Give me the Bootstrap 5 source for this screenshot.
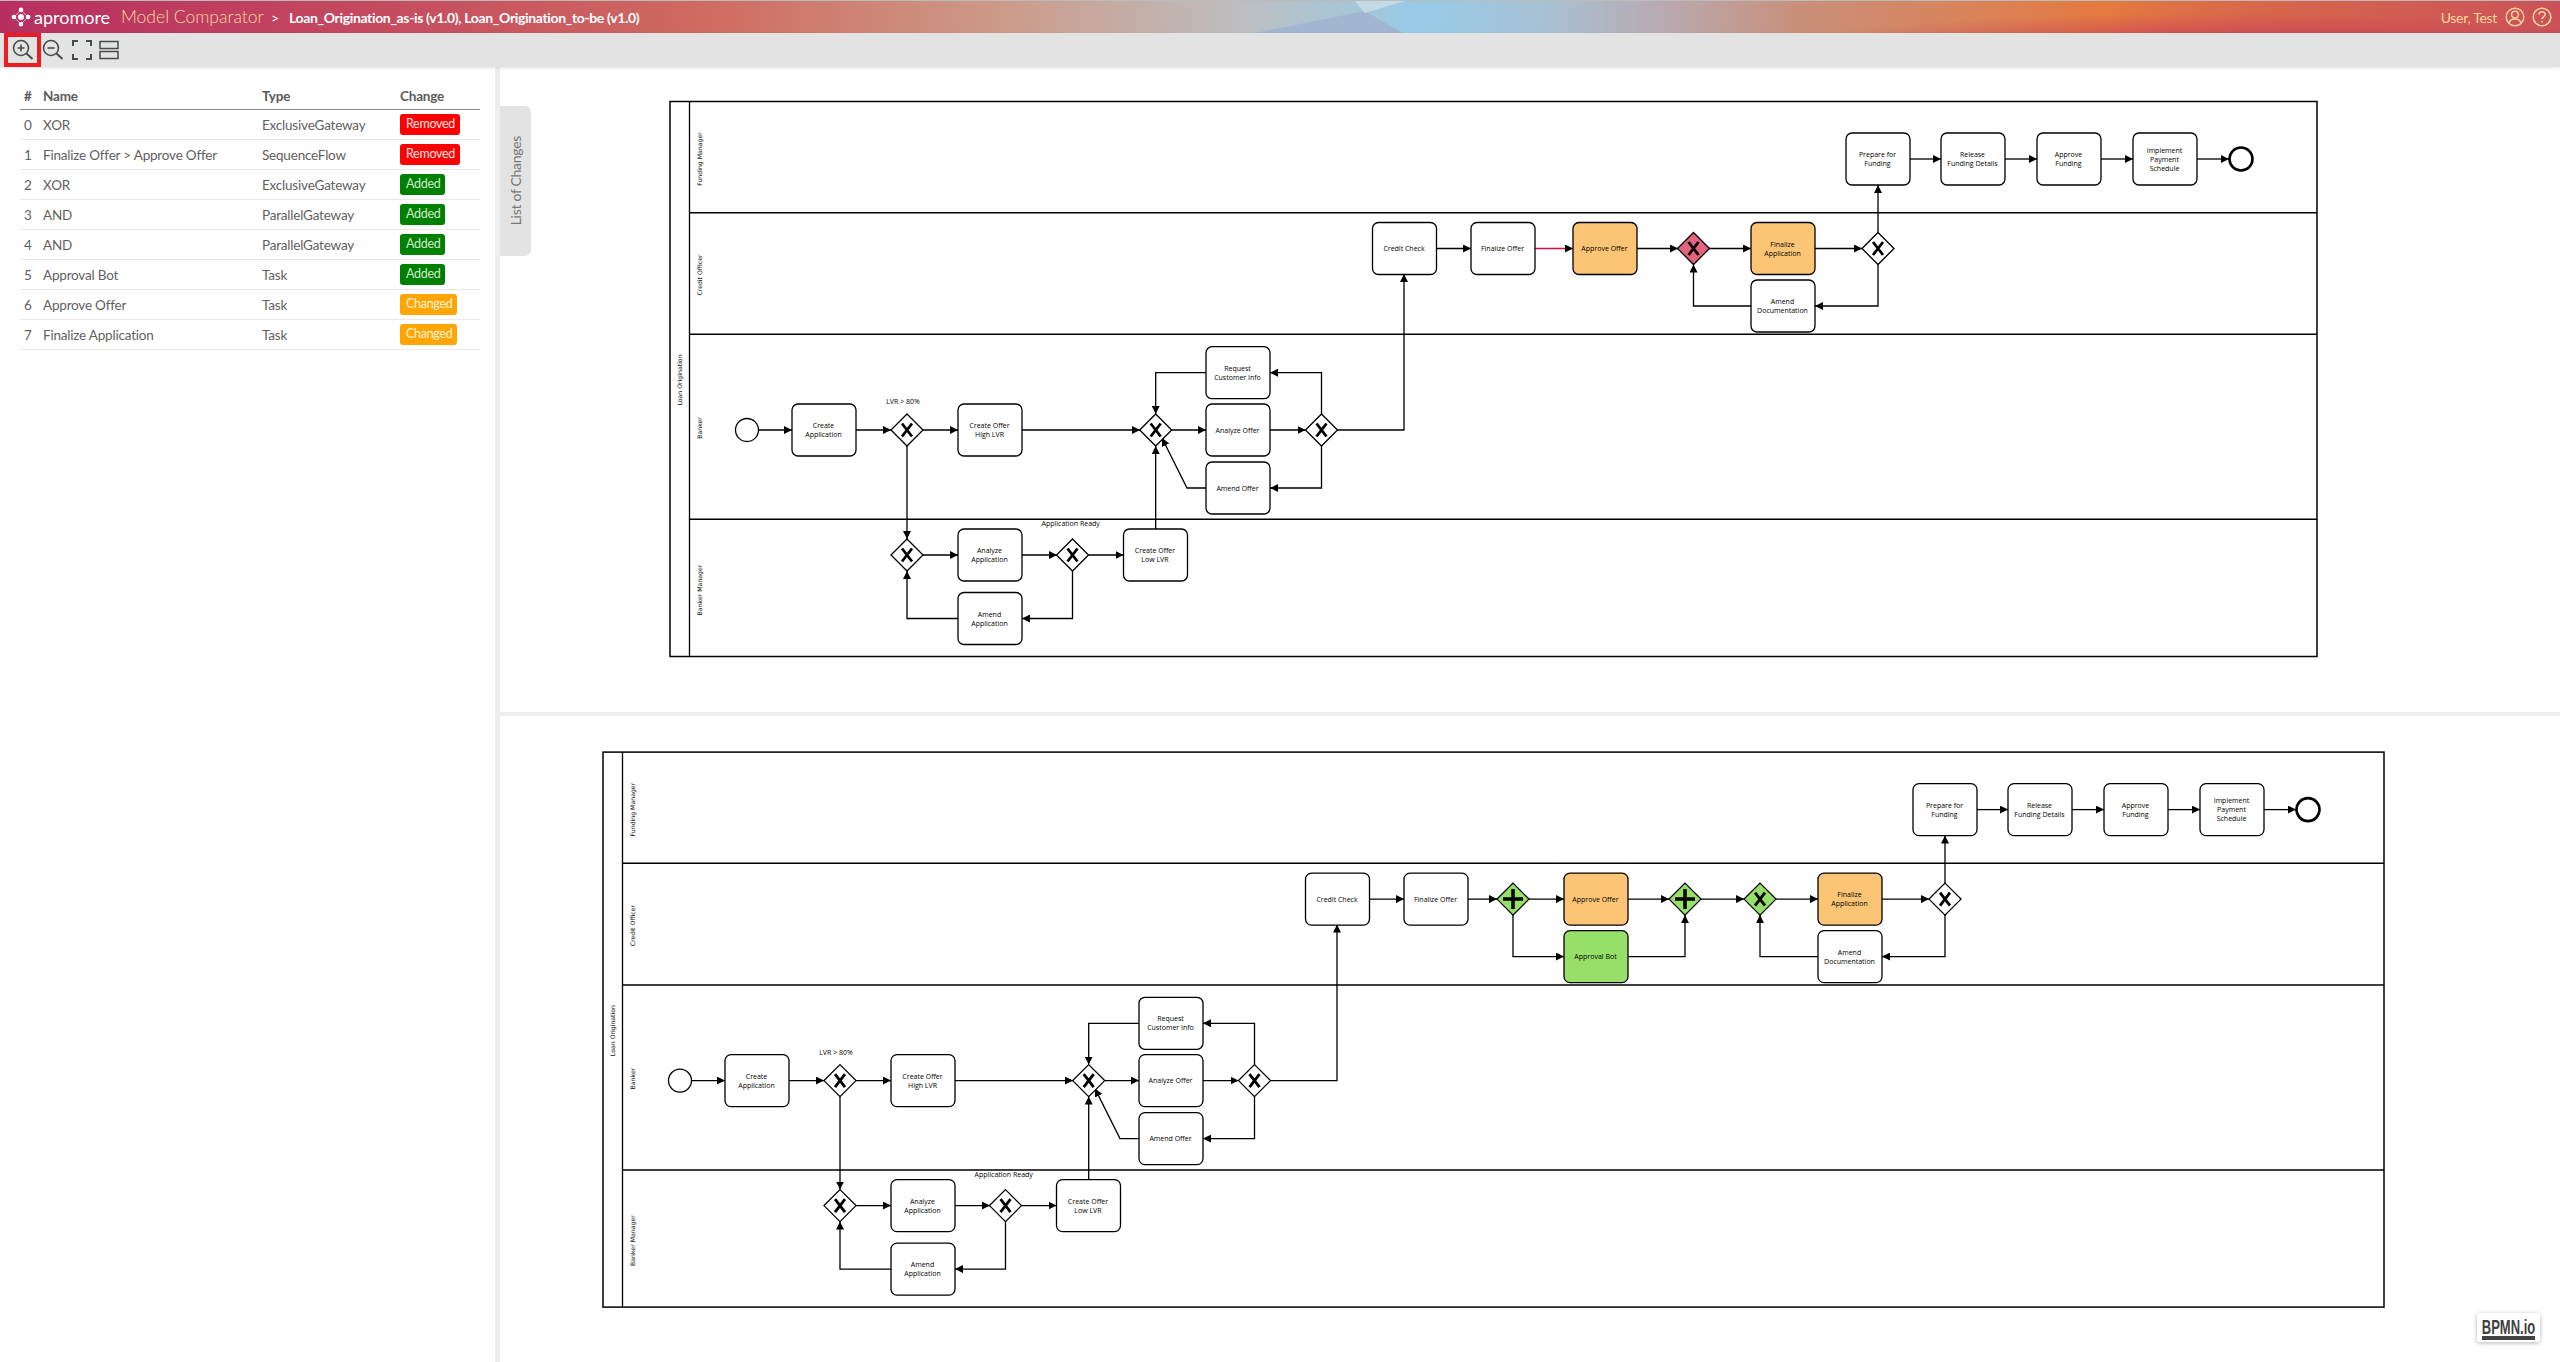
<!DOCTYPE html>
<html lang="en">
<head>
    <meta charset="UTF-8">
    <meta name="viewport" content="width=device-width, initial-scale=1.0">
    <title>Model Comparator</title>
    <link href="https://cdn.jsdelivr.net/npm/bootstrap@5.3.0/dist/css/bootstrap.min.css" rel="stylesheet">
    <style>
        html, body { height: 100%; }
        body { font-family: Lato, "Noto Sans", sans-serif; overflow: hidden; background: #fff; }

        /* Header */
        .top-bar {
            height: 33px; border-top: 1px solid #bbb; position: relative; overflow: hidden; padding-left: 11px;
            background:
                radial-gradient(ellipse 420px 30px at 2230px 42px, rgba(200,65,90,.95), rgba(200,65,90,0)),
                linear-gradient(to right, #b72f60 0, #c4485f 350px, #cf6a60 700px, #cd9a88 1000px, #bcbfc2 1250px,
                    #96cbe8 1420px, #a9c0d2 1550px, #bba6aa 1680px, #c98f7a 1800px, #e57a40 2100px, #d9674a 2250px, #ca5258 2560px);
        }
        .top-bar::before {
            content: ""; position: absolute; left: 1250px; top: 0; width: 190px; height: 33px;
            background: #a3b6cf; clip-path: polygon(0 100%, 115px 10px, 155px 100%);
        }
        .top-bar::after {
            content: ""; position: absolute; left: 1355px; top: 0; width: 60px; height: 12px;
            background: #c2dbe6; clip-path: polygon(0 0, 50px 0, 10px 100%);
        }
        .top-bar > * { position: relative; z-index: 1; flex: none; }
        .logo-word { color: #fff; font-size: 18px; font-weight: 400; width: 87px; margin-left: 3px; }
        .app-name { color: #fbd79c; font-size: 17.500px; font-weight: 300; width: 150px; white-space: nowrap; }
        .crumb-sep { color: #fff; font-size: 14px; width: 18px; }
        .file-names { color: #fff; font-size: 14px; font-weight: 700; letter-spacing: -.35px; }
        .user-name { color: #fbd5a0; font-size: 14px; letter-spacing: -.3px; }
        .help-ico { margin: 0 8px 0 7px; }

        /* Toolbar */
        .tool-bar { height: 34px; background: #e3e3e3; padding-left: 4px; box-shadow: 0 1px 3px rgba(0,0,0,.12); position: relative; z-index: 2; }
        .tool-btn { width: 27px; height: 34px; padding: 0; border: 0; background: none; display: flex; align-items: center; justify-content: center; }
        .tool-btn.is-active { width: 37px; margin-right: -2px; outline: 4px solid #ed1c24; outline-offset: -4px; }
        .tool-btn.is-out { margin-right: 2px; }

        /* Left list */
        .side-list { width: 495px; padding: 14px 15px 0 20px; flex: none; }
        .change-table { width: 460px; table-layout: fixed; margin: 0; color: #5f5f5f; font-size: 13.5px; letter-spacing: -.2px; }
        .change-table th { color: #5a5a5a; font-weight: 700; height: 28px; padding: 3px 0 0 4px; border-bottom: 1px solid #888; vertical-align: middle; }
        .change-table td { height: 30px; padding: 2px 0 0 4px; vertical-align: middle; color: #5f5f5f; border-bottom: 1px solid #e8e8e8; }
        .cell-num { width: 19px; } .cell-name { width: 219px; } .cell-type { width: 138px; } .cell-change { width: 84px; }
        .state-tag { display: inline-block; height: 21px; line-height: 19px; padding: 0 6px; font-size: 12.500px; letter-spacing: -.3px; border-radius: 3px; font-weight: 400; vertical-align: middle; margin-top: -3px; }
        .state-removed { background: #f00; color: #ffe6e6; width: 60px; }
        .state-added { background: #008000; color: #cfe8cf; width: 45px; }
        .state-changed { background: #ffa500; color: #fff3dc; width: 57px; }

        .v-split { width: 5px; background: #eee; flex: none; }
        .h-split { height: 4px; background: #eee; flex: none; }
        .list-tab {
            position: absolute; left: 500px; top: 106px; width: 31px; height: 150px; background: #e3e3e3;
            border-radius: 0 6px 6px 0; color: #777; font-size: 14px; letter-spacing: -.3px; z-index: 3;
            display: flex; align-items: center; justify-content: center;
        }
        .list-tab span { writing-mode: vertical-rl; transform: rotate(180deg); white-space: nowrap; }

        /* Diagrams */
        .pane-top { height: 645px; }
        .pane-bottom { height: 646px; }
        .pane-top svg, .pane-bottom svg { display: block; width: 2060px; height: 100%; }
        .t-task { font-family: "Open Sans", sans-serif; font-size: 7px; fill: #000; text-anchor: middle; }
        .t-lane { font-family: "DejaVu Sans", sans-serif; font-size: 6.200px; fill: #111; text-anchor: middle; }
        .bpmn-mark { position: absolute; left: 2477px; top: 1313px; width: 63px; height: 29px; background: #fff; border-radius: 2px; box-shadow: 0 1px 4px rgba(0,0,0,.3); z-index: 3; }
        .bpmn-mark svg { display: block; }
    </style>
</head>
<body class="d-flex flex-column">
    <!-- Header -->
    <header class="top-bar d-flex align-items-center">
        <svg width="20" height="20" viewBox="0 0 24 24" fill="#fff">
            <circle cx="12" cy="12" r="3.600"/>
            <circle cx="12" cy="3.500" r="2.800"/><circle cx="12" cy="20.500" r="2.800"/>
            <circle cx="3.500" cy="12" r="2.800"/><circle cx="20.500" cy="12" r="2.800"/>
            <path d="M12 3.500L20.500 12L12 20.500L3.500 12Z" fill="none" stroke="#fff" stroke-width="1" opacity=".75"/>
        </svg>
        <span class="logo-word">apromore</span>
        <span class="app-name">Model Comparator</span>
        <span class="crumb-sep">&gt;</span>
        <span class="file-names">Loan_Origination_as-is (v1.0), Loan_Origination_to-be (v1.0)</span>
        <span class="user-name ms-auto me-2">User, Test</span>
        <svg width="20" height="20" viewBox="0 0 20 20" fill="none" stroke="#fbd5a0" stroke-width="1.400">
            <circle cx="10" cy="10" r="8.800"/><circle cx="10" cy="7.600" r="3.400"/>
            <path d="M4 16c.8-3 3-4 6-4s5.200 1 6 4"/>
        </svg>
        <svg class="help-ico" width="20" height="20" viewBox="0 0 20 20" fill="none" stroke="#fbd5a0" stroke-width="1.600">
            <circle cx="10" cy="10" r="8.800"/>
            <path d="M7 7.600c0-1.800 1.400-2.800 3-2.800s3 1 3 2.700c0 2.400-3 2.300-3 4.700"/><path d="M10 14v1.600"/>
        </svg>
    </header>

    <!-- Toolbar -->
    <div class="tool-bar d-flex">
        <button class="tool-btn is-active" type="button" aria-label="Zoom in">
            <svg width="24" height="24" viewBox="0 0 24 24" fill="none" stroke="#4a4a4a" stroke-width="1.600">
                <circle cx="10" cy="10" r="7.500"/><path d="M6.500 10h7M10 6.500v7"/><path d="M15.500 15.500l6 5.500" stroke-width="2"/>
            </svg>
        </button>
        <button class="tool-btn is-out" type="button" aria-label="Zoom out">
            <svg width="24" height="24" viewBox="0 0 24 24" fill="none" stroke="#4a4a4a" stroke-width="1.600">
                <circle cx="10" cy="10" r="7.500"/><path d="M6.500 10h7"/><path d="M15.500 15.500l6 5.500" stroke-width="2"/>
            </svg>
        </button>
        <button class="tool-btn" type="button" aria-label="Fit">
            <svg width="20" height="20" viewBox="0 0 20 20" fill="none" stroke="#4a4a4a" stroke-width="2">
                <path d="M1 6V1h5M14 1h5v5M19 14v5h-5M6 19H1v-5"/>
            </svg>
        </button>
        <button class="tool-btn" type="button" aria-label="Layout">
            <svg width="20" height="20" viewBox="0 0 20 20" fill="none" stroke="#4a4a4a" stroke-width="1.500">
                <rect x="1" y="1.500" width="18" height="7"/><rect x="1" y="11.500" width="18" height="7"/>
            </svg>
        </button>
    </div>

    <!-- Main -->
    <div class="d-flex flex-fill overflow-hidden">
        <div class="side-list">
            <table class="table change-table">
                <thead>
                    <tr><th class="cell-num">#</th><th class="cell-name">Name</th><th class="cell-type">Type</th><th class="cell-change">Change</th></tr>
                </thead>
                <tbody>
                    <tr><td>0</td><td>XOR</td><td>ExclusiveGateway</td><td><span class="state-tag state-removed">Removed</span></td></tr>
                    <tr><td>1</td><td>Finalize Offer &gt; Approve Offer</td><td>SequenceFlow</td><td><span class="state-tag state-removed">Removed</span></td></tr>
                    <tr><td>2</td><td>XOR</td><td>ExclusiveGateway</td><td><span class="state-tag state-added">Added</span></td></tr>
                    <tr><td>3</td><td>AND</td><td>ParallelGateway</td><td><span class="state-tag state-added">Added</span></td></tr>
                    <tr><td>4</td><td>AND</td><td>ParallelGateway</td><td><span class="state-tag state-added">Added</span></td></tr>
                    <tr><td>5</td><td>Approval Bot</td><td>Task</td><td><span class="state-tag state-added">Added</span></td></tr>
                    <tr><td>6</td><td>Approve Offer</td><td>Task</td><td><span class="state-tag state-changed">Changed</span></td></tr>
                    <tr><td>7</td><td>Finalize Application</td><td>Task</td><td><span class="state-tag state-changed">Changed</span></td></tr>
                </tbody>
            </table>
        </div>
        <div class="v-split"></div>
        <div class="flex-fill d-flex flex-column">
            <div class="pane-top"><svg id="diagram-top" viewBox="500 67 2060 645"></svg></div>
            <div class="h-split"></div>
            <div class="pane-bottom"><svg id="diagram-bottom" viewBox="500 716 2060 646"></svg></div>
        </div>
    </div>

    <div class="list-tab"><span>List of Changes</span></div>
    <div class="bpmn-mark">
        <svg width="63" height="29" viewBox="0 0 63 29">
            <text transform="translate(31.500 21) scale(1 1.500)" text-anchor="middle" font-family="'Liberation Sans', sans-serif" font-size="13" font-weight="700" fill="#414141">BPMN.io</text>
            <rect x="5" y="23" width="53" height="4" fill="#414141"/>
        </svg>
    </div>

    <script>
        const ORANGE = '#fbc575', GREEN = '#96df68', PINK = '#e3647f';

        // Draws one pool. Coordinates are those of the upper diagram, dy moves them down
        function buildDiagram(svgId, opt) {
            const { dy, L, R, x0, x1, extra, withDefs } = opt;
            let out = '';
            if (withDefs) {
                out += '<defs><marker id="arrow" viewBox="0 0 10 10" refX="10" refY="5" markerWidth="8" markerHeight="8" orient="auto" markerUnits="userSpaceOnUse"><path d="M0 0L10 5L0 10z" fill="#000"/></marker></defs>';
            }

            // pool and lanes
            out += `<rect x="${x0}" y="${101.5 + dy}" width="${x1 - x0}" height="555" fill="#fff" stroke="#000" stroke-width="1.500"/>`;
            out += `<path d="M${x0 + 19.500} ${101.5 + dy}V${656.5 + dy}" stroke="#000" stroke-width="1.300"/>`;
            [212.7, 334.3, 519.3].forEach(y => {
                out += `<path d="M${x0 + 19.500} ${y + dy}H${x1}" stroke="#000" stroke-width="1.500"/>`;
            });
            const vText = (x, y, s) => `<text class="t-lane" transform="translate(${x} ${y + dy}) rotate(-90)">${s}</text>`;
            out += vText(x0 + 11.500, 380, 'Loan Origination');
            out += vText(x0 + 31.500, 159, 'Funding Manager');
            out += vText(x0 + 31.500, 275, 'Credit Officer');
            out += vText(x0 + 31.500, 428, 'Banker');
            out += vText(x0 + 31.500, 590, 'Banker Manager');

            const flow = (pts, color) => {
                const d = pts.map(p => `${p[0]},${p[1] + dy}`).join(' ');
                out += `<polyline points="${d}" fill="none" stroke="${color || '#000'}" stroke-width="1.300" marker-end="url(#arrow)"/>`;
            };
            const task = (x, cy, lines, fill) => {
                out += `<rect x="${x}" y="${cy + dy - 26}" width="64" height="52" rx="6" fill="${fill || '#fff'}" stroke="#000" stroke-width="1.300"/>`;
                const top = cy + dy + 2.500 - (lines.length - 1) * 4.500;
                lines.forEach((s, i) => {
                    out += `<text class="t-task" x="${x + 31.500}" y="${top + i * 9}">${s}</text>`;
                });
            };
            const gate = (cx, cy, kind, fill) => {
                const y = cy + dy;
                out += `<path d="M${cx} ${y - 16}L${cx + 16} ${y}L${cx} ${y + 16}L${cx - 16} ${y}Z" fill="${fill || '#fff'}" stroke="#000" stroke-width="1.300"/>`;
                if (kind === 'x') {
                    out += `<path d="M${cx - 5} ${y - 6.500}L${cx + 5} ${y + 6.500}M${cx + 5} ${y - 6.500}L${cx - 5} ${y + 6.500}" stroke="#000" stroke-width="2.800"/>`;
                } else {
                    out += `<path d="M${cx - 10} ${y}H${cx + 10}M${cx} ${y - 10}V${y + 10}" stroke="#000" stroke-width="3.500"/>`;
                }
            };
            const circle = (cx, cy, w) => {
                out += `<circle cx="${cx}" cy="${cy + dy}" r="11.500" fill="#fff" stroke="#000" stroke-width="${w}"/>`;
            };
            const label = (x, y, s) => {
                out += `<text class="t-task" x="${x}" y="${y + dy}">${s}</text>`;
            };

            // flows of the left part, same in both diagrams
            flow([[759 + L, 430], [792 + L, 430]]);
            flow([[856 + L, 430], [891 + L, 430]]);
            flow([[923 + L, 430], [958 + L, 430]]);
            flow([[1022 + L, 430], [1140 + L, 430]]);
            flow([[1172 + L, 430], [1206 + L, 430]]);
            flow([[1270 + L, 430], [1305.5 + L, 430]]);
            flow([[1321.5 + L, 414], [1321.5 + L, 372.7], [1270 + L, 372.7]]);
            flow([[1206 + L, 372.7], [1155.7 + L, 372.7], [1155.7 + L, 414]]);
            flow([[1321.5 + L, 446], [1321.5 + L, 488], [1270 + L, 488]]);
            flow([[1206 + L, 488], [1187 + L, 488], [1162 + L, 438]]);
            flow([[1155.7 + L, 529], [1155.7 + L, 446]]);
            flow([[907 + L, 446], [907 + L, 539]]);
            flow([[923 + L, 555], [958 + L, 555]]);
            flow([[1022 + L, 555], [1057 + L, 555]]);
            flow([[1088.5 + L, 555], [1123.5 + L, 555]]);
            flow([[1072.5 + L, 571], [1072.5 + L, 618.5], [1022 + L, 618.5]]);
            flow([[958 + L, 618.5], [907 + L, 618.5], [907 + L, 571]]);
            flow([[1337 + L, 430], [1404 + L, 430], [1404 + L, 274]]);
            flow([[1436 + L, 248.5], [1471 + L, 248.5]]);

            // funding lane, moved to the right in the lower diagram
            flow([[1910 + R, 159], [1941 + R, 159]]);
            flow([[2005 + R, 159], [2037 + R, 159]]);
            flow([[2101 + R, 159], [2133 + R, 159]]);
            flow([[2197 + R, 159], [2229 + R, 159]]);

            extra({ flow, task, gate });

            circle(747 + L, 430, 1.300);
            task(792 + L, 430, ['Create', 'Application']);
            gate(907 + L, 430, 'x');
            label(903 + L, 404, 'LVR &gt; 80%');
            task(958 + L, 430, ['Create Offer', 'High LVR']);
            gate(1155.7 + L, 430, 'x');
            task(1206 + L, 372.7, ['Request', 'Customer Info']);
            task(1206 + L, 430, ['Analyze Offer']);
            task(1206 + L, 488, ['Amend Offer']);
            gate(1321.5 + L, 430, 'x');
            gate(907 + L, 555, 'x');
            task(958 + L, 555, ['Analyze', 'Application']);
            gate(1072.5 + L, 555, 'x');
            task(1123.5 + L, 555, ['Create Offer', 'Low LVR']);
            task(958 + L, 618.5, ['Amend', 'Application']);
            label(1070.7 + L, 526, 'Application Ready');
            task(1372.5 + L, 248.5, ['Credit Check']);
            task(1471 + L, 248.5, ['Finalize Offer']);
            task(1846 + R, 159, ['Prepare for', 'Funding']);
            task(1941 + R, 159, ['Release', 'Funding Details']);
            task(2037 + R, 159, ['Approve', 'Funding']);
            task(2133 + R, 159, ['Implement', 'Payment', 'Schedule']);
            circle(2241 + R, 159, 2.600);

            document.getElementById(svgId).innerHTML = out;
        }

        buildDiagram('diagram-top', {
            dy: 0, L: 0, R: 0, x0: 670, x1: 2317, withDefs: true,
            extra({ flow, task, gate }) {
                flow([[1535, 248.5], [1573, 248.5]], '#d4103f');
                flow([[1637, 248.5], [1678, 248.5]]);
                flow([[1709, 248.5], [1751, 248.5]]);
                flow([[1815, 248.5], [1862, 248.5]]);
                flow([[1878, 232.5], [1878, 185]]);
                flow([[1878, 264.5], [1878, 306], [1815, 306]]);
                flow([[1751, 306], [1693.5, 306], [1693.5, 264.5]]);
                task(1573, 248.5, ['Approve Offer'], ORANGE);
                gate(1693.5, 248.5, 'x', PINK);
                task(1751, 248.5, ['Finalize', 'Application'], ORANGE);
                gate(1878, 248.5, 'x');
                task(1751, 306, ['Amend', 'Documentation']);
            }
        });

        buildDiagram('diagram-bottom', {
            dy: 650.6, L: -67, R: 67, x0: 603, x1: 2384,
            extra({ flow, task, gate }) {
                flow([[1468, 248.5], [1497, 248.5]]);
                flow([[1529, 248.5], [1564, 248.5]]);
                flow([[1628, 248.5], [1669, 248.5]]);
                flow([[1701, 248.5], [1744, 248.5]]);
                flow([[1776, 248.5], [1818, 248.5]]);
                flow([[1882, 248.5], [1929, 248.5]]);
                flow([[1513, 264.5], [1513, 306], [1564, 306]]);
                flow([[1628, 306], [1685, 306], [1685, 264.5]]);
                flow([[1945, 232.5], [1945, 185]]);
                flow([[1945, 264.5], [1945, 306], [1882, 306]]);
                flow([[1818, 306], [1760, 306], [1760, 264.5]]);
                gate(1513, 248.5, 'plus', GREEN);
                task(1564, 248.5, ['Approve Offer'], ORANGE);
                task(1564, 306, ['Approval Bot'], GREEN);
                gate(1685, 248.5, 'plus', GREEN);
                gate(1760, 248.5, 'x', GREEN);
                task(1818, 248.5, ['Finalize', 'Application'], ORANGE);
                gate(1945, 248.5, 'x');
                task(1818, 306, ['Amend', 'Documentation']);
            }
        });
    </script>
    <script src="https://cdn.jsdelivr.net/npm/bootstrap@5.3.0/dist/js/bootstrap.bundle.min.js"></script>
</body>
</html>
